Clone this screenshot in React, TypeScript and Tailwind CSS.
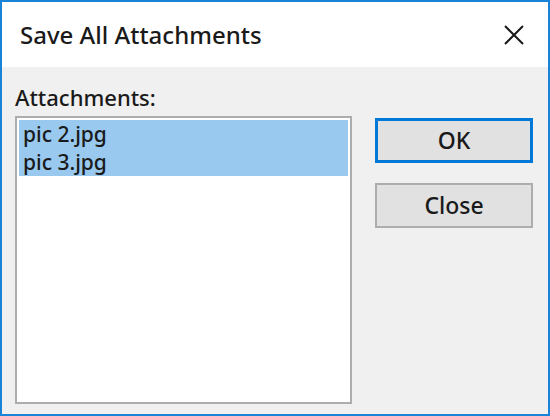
import React from 'react'

const App: React.FC = () => {
  const files = ['pic 2.jpg', 'pic 3.jpg']

  return (
    <div className="w-[550px] h-[416px] flex flex-col border-2 border-[#1883d7] bg-[#f0f0f0] text-[#1a1a1a] font-['Noto_Sans',sans-serif] overflow-hidden">
      <div className="h-[65px] shrink-0 bg-white flex items-center justify-between pl-[18px] pr-[24px]">
        <span className="text-[24px] leading-none font-medium">Save All Attachments</span>
        <svg width="20" height="20" viewBox="0 0 20 20" className="text-[#1a1a1a]">
          <path d="M1 1 L19 19 M19 1 L1 19" stroke="currentColor" strokeWidth="2" />
        </svg>
      </div>

      <div className="flex-1 flex pl-[13px] pr-[14px] pt-[17px] pb-[10px] gap-[23px]">
        <div className="flex flex-col w-[337px]">
          <label className="text-[22px] leading-[26px] mb-[6px] font-medium">Attachments:</label>
          <div className="flex-1 bg-white border-2 border-[#adadad] p-[2px]">
            {files.map((f) => (
              <div key={f} className="bg-[#99c9ef] text-[21px] leading-[28px] pl-[4px] font-medium">
                {f}
              </div>
            ))}
          </div>
        </div>

        <div className="flex flex-col gap-[20px] pt-[34px] w-[158px]">
          <button className="h-[45px] bg-[#e1e1e1] border-[3px] border-[#0078d7] text-[23px] font-medium">OK</button>
          <button className="h-[45px] bg-[#e1e1e1] border-2 border-[#adadad] text-[23px] font-medium">Close</button>
        </div>
      </div>
    </div>
  )
}

export default App
